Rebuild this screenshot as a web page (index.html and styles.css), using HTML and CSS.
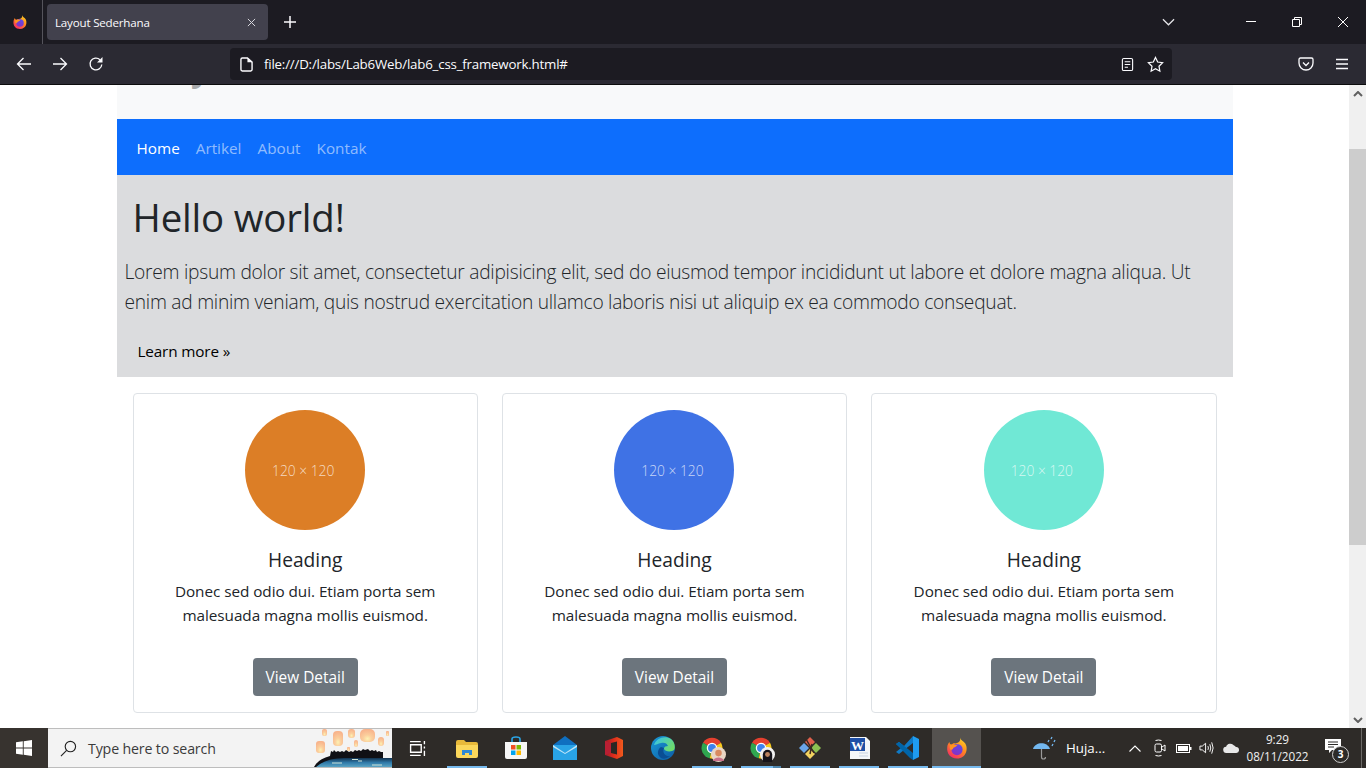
FILE: index.html
```html
<!DOCTYPE html>
<html lang="id">
<head>
<meta charset="utf-8">
<title>Layout Sederhana</title>
<link rel="stylesheet" href="styles.css">
</head>
<body>
<svg class="defs" width="0" height="0" aria-hidden="true">
  <defs>
    <linearGradient id="fxg" x1="0.8" y1="0" x2="0.2" y2="1"><stop offset="0" stop-color="#ffd426"/><stop offset="0.45" stop-color="#ff8a1f"/><stop offset="1" stop-color="#f5236b"/></linearGradient>
    <linearGradient id="fxp" x1="0.7" y1="0" x2="0.3" y2="1"><stop offset="0" stop-color="#5b4be8"/><stop offset="1" stop-color="#8a2fc0"/></linearGradient>
    <linearGradient id="edg" x1="0" y1="0" x2="1" y2="1"><stop offset="0" stop-color="#1b9ad6"/><stop offset="1" stop-color="#0c5ba5"/></linearGradient>
    <linearGradient id="edg2" x1="0" y1="0" x2="1" y2="0.6"><stop offset="0" stop-color="#35c1f1"/><stop offset="1" stop-color="#6fdc6a"/></linearGradient>
    <linearGradient id="ofg" x1="0" y1="0" x2="1" y2="0"><stop offset="0" stop-color="#a01a2c"/><stop offset="0.5" stop-color="#e02d1b"/><stop offset="1" stop-color="#f05a1d"/></linearGradient>
    <radialGradient id="lan" cx="0.5" cy="0.75" r="0.7"><stop offset="0" stop-color="#fdf2b4"/><stop offset="0.4" stop-color="#fbcf9d"/><stop offset="1" stop-color="#f8b48c"/></radialGradient>
    <linearGradient id="wat" x1="0" y1="0" x2="0" y2="1"><stop offset="0" stop-color="#12324f"/><stop offset="0.5" stop-color="#2f79a8"/><stop offset="1" stop-color="#5aa4c4"/></linearGradient>
    <symbol id="firefox" viewBox="0 0 32 32">
      <path d="M20 2c1 4 5 5 7 8 4 6 2 20-11 20C7 30 2 23 3 15c0-3 2-6 3-7 0 2 1 3 2 4 2-2 4-2.500 6-2 6-1 7-5 6-8z" fill="url(#fxg)"/>
      <circle cx="16" cy="18" r="7.500" fill="url(#fxp)"/>
      <path d="M7 11c3 1 7 2 10 0-2 4-5 4-6 5 0 2-3 3-4 2-1-2-1-5 0-7z" fill="#ff9320"/>
    </symbol>
    <symbol id="chrome" viewBox="0 0 32 32">
      <path d="M16 16 4 9A14 14 0 0 1 28 9z" fill="#e5402f"/>
      <path d="M16 16 4 9a14 14 0 0 0 9 20.800z" fill="#2fa650"/>
      <path d="M16 16 28 9a14 14 0 0 1-15 20.800z" fill="#f8c91c"/>
      <circle cx="16" cy="16" r="7" fill="#fff"/>
      <circle cx="16" cy="16" r="5.300" fill="#3f82ee"/>
    </symbol>
  </defs>
</svg>

<div class="browser">
  <header class="tabbar">
    <div class="fx-slot"><svg class="ic16" viewBox="0 0 32 32"><use href="#firefox"/></svg></div>
    <div class="tab">
      <span class="tab-title">Layout Sederhana</span>
      <svg class="ic-close" viewBox="0 0 10 10"><path d="M1 1l8 8M9 1l-8 8"/></svg>
    </div>
    <svg class="ic-new" viewBox="0 0 14 14"><path d="M7 1v12M1 7h12"/></svg>
    <svg class="ic-list" viewBox="0 0 14 8"><path d="M1 1l6 6 6-6"/></svg>
    <div class="winctl">
      <div class="winbtn"><svg viewBox="0 0 10 10"><path d="M0 4.500h10"/></svg></div>
      <div class="winbtn"><svg viewBox="0 0 10 10"><path d="M.5 2.500h7v7h-7zM2.500 2.500V.5h7v7h-2"/></svg></div>
      <div class="winbtn"><svg viewBox="0 0 10 10"><path d="M0 0l10 10M10 0L0 10"/></svg></div>
    </div>
  </header>

  <nav class="toolbar">
    <button class="tool"><svg viewBox="0 0 16 16"><path d="M15 8H1.500M7.500 2 1.500 8l6 6"/></svg></button>
    <button class="tool"><svg viewBox="0 0 16 16"><path d="M1 8h13.500M8.500 2l6 6-6 6"/></svg></button>
    <button class="tool"><svg viewBox="0 0 16 16"><path d="M13.800 8.500A5.900 5.900 0 1 1 12 3.700"/><path class="fill" d="M14.500 1v5.500H9z"/></svg></button>
    <div class="urlbar">
      <svg class="ic-doc" viewBox="0 0 14 16"><path d="M2.500 1h5.500l5 4.500v8q0 1.500-1.500 1.500h-9Q1 15 1 13.500v-11Q1 1 2.500 1z"/><path class="fill" d="M8 1l5 4.500H8z"/></svg>
      <span class="url">file:///D:/labs/Lab6Web/lab6_css_framework.html#</span>
      <svg class="ic-reader" viewBox="0 0 14 16"><rect x="1.500" y="1.500" width="11" height="13" rx="1.500"/><path d="M4 5h6M4 8h6M4 11h3.500"/></svg>
      <svg class="ic-star" viewBox="0 0 18 18"><path d="M9 1.500l2.300 4.900 5.200.7-3.800 3.700.9 5.300L9 13.500l-4.600 2.600.9-5.300L1.500 7.100l5.200-.7z"/></svg>
    </div>
    <button class="tool tool-push"><svg viewBox="0 0 16 16"><path d="M2.500 2h11Q15 2 15 3.500V7A7 7 0 0 1 1 7V3.500Q1 2 2.500 2z"/><path d="M5 6.500l3 3 3-3"/></svg></button>
    <button class="tool"><svg viewBox="0 0 16 16"><path d="M2 3.500h12M2 8h12M2 12.500h12"/></svg></button>
  </nav>

  <div class="viewport">
    <main class="page">
      <div class="container">
        <div class="brandbar"><span class="brand">Layout</span></div>
        <div class="navbar">
          <a class="navlink active" href="#">Home</a>
          <a class="navlink" href="#">Artikel</a>
          <a class="navlink" href="#">About</a>
          <a class="navlink" href="#">Kontak</a>
        </div>
        <section class="hero">
          <h1 class="hero-title">Hello world!</h1>
          <p class="lead">Lorem ipsum dolor sit amet, consectetur adipisicing elit, sed do eiusmod tempor incididunt ut labore et dolore magna aliqua. Ut enim ad minim veniam, quis nostrud exercitation ullamco laboris nisi ut aliquip ex ea commodo consequat.</p>
          <a class="learn" href="#">Learn more »</a>
        </section>
        <section class="cards">
          <article class="card">
            <div class="thumb orange">120 × 120</div>
            <h5 class="card-title">Heading</h5>
            <p class="card-text">Donec sed odio dui. Etiam porta sem malesuada magna mollis euismod.</p>
            <a class="btn" href="#">View Detail</a>
          </article>
          <article class="card">
            <div class="thumb blue">120 × 120</div>
            <h5 class="card-title">Heading</h5>
            <p class="card-text">Donec sed odio dui. Etiam porta sem malesuada magna mollis euismod.</p>
            <a class="btn" href="#">View Detail</a>
          </article>
          <article class="card">
            <div class="thumb teal">120 × 120</div>
            <h5 class="card-title">Heading</h5>
            <p class="card-text">Donec sed odio dui. Etiam porta sem malesuada magna mollis euismod.</p>
            <a class="btn" href="#">View Detail</a>
          </article>
        </section>
      </div>
    </main>
    <div class="scrollbar">
      <div class="sb-arrow"><svg viewBox="0 0 10 6"><path d="M1 5l4-4 4 4"/></svg></div>
      <div class="sb-gap"></div>
      <div class="sb-thumb"></div>
      <div class="sb-rest"></div>
      <div class="sb-arrow"><svg viewBox="0 0 10 6"><path d="M1 1l4 4 4-4"/></svg></div>
    </div>
  </div>
</div>

<footer class="taskbar">
  <div class="start">
    <svg viewBox="0 0 16 16"><path d="M0 2.300 6.800 1.300v6.300H0zM7.700 1.200 16 0v7.600H7.700zM0 8.400h6.800v6.300L0 13.700zM7.700 8.400H16V16l-8.300-1.200z"/></svg>
  </div>
  <div class="search">
    <svg class="ic-search" viewBox="0 0 18 18"><circle cx="11" cy="7" r="5.500"/><path d="M7 11l-6 6"/></svg>
    <span class="search-text">Type here to search</span>
    <svg class="scene" viewBox="0 0 80 38">
      <g fill="url(#lan)">
        <rect x="10" y="0" width="5" height="7" rx="2"/><rect x="21" y="2" width="10" height="15" rx="4"/>
        <rect x="4" y="12" width="9" height="12" rx="3"/><rect x="36" y="0" width="7" height="9" rx="3"/>
        <rect x="42" y="11" width="4" height="7" rx="2"/><rect x="48" y="0" width="15" height="13" rx="5"/>
        <rect x="66" y="8" width="6" height="9" rx="3"/><rect x="74" y="2" width="3" height="5" rx="1"/>
        <rect x="35" y="18" width="3" height="4" rx="1"/>
      </g>
      <path d="M2 38Q6 30 18 27l1-5 2 1 1-2 2 2 2-1 2 1 2-1 2 1 2-2 3 2 2-1 2 1 2-2 2 1 2-1 2 1 2-2 2 1 3-1 2 2 2-1 2 1 2-1 1 2 2-1 2 1 2 0v16z" fill="#101015"/>
      <path d="M4 38Q14 29 32 29h48v9z" fill="url(#wat)"/>
      <path d="M20 34h10M40 30.500h6M46 32h4M60 36h10" stroke="#cfe4d8"/>
    </svg>
  </div>
  <div class="apps">
    <div class="app"><svg class="ic-white" viewBox="0 0 16 16"><path d="M1 1.500h10M1 14.500h10M1.500 4.500h10v7h-10zM14.500 1v3M14.500 6v2M14.500 10v5"/></svg></div>
    <div class="app on">
      <svg viewBox="0 0 24 24"><path d="M1 6Q1 4 3 4h6l2 2h10q2 0 2 2v12H1z" fill="#e8b93a"/><path d="M1 9h22v11q0 2-2 2H3q-2 0-2-2z" fill="#fbd75b"/><path d="M7 19v-5h10v5h-3v-2h-4v2z" fill="#2f88d4"/></svg>
    </div>
    <div class="app">
      <svg viewBox="0 0 24 24"><path d="M8 6V3q0-2 4-2t4 2v3" fill="none" stroke="#2aa6e8" stroke-width="1.600"/><path d="M1 6h22v15q0 2-2 2H3q-2 0-2-2z" fill="#f6f6f6"/><path fill="#f25022" d="M7 9h4.500v4.500H7z"/><path fill="#7fba00" d="M12.500 9H17v4.500h-4.500z"/><path fill="#00a4ef" d="M7 14.500h4.500V19H7z"/><path fill="#ffb900" d="M12.500 14.500H17V19h-4.500z"/></svg>
    </div>
    <div class="app">
      <svg viewBox="0 0 24 24"><path d="M0 9 12 0l12 9z" fill="#0f6fc0"/><path d="M0 9h24v15H0z" fill="#29a3e6"/><path d="M0 9l12 8 12-8v2l-12 7L0 11z" fill="#bfe4f7"/></svg>
    </div>
    <div class="app">
      <svg viewBox="0 0 24 24"><path d="M3 5 15 1l6 3v16l-6 3-12-4z" fill="url(#ofg)"/><path d="M9 7l6-1.500v13L9 17z" fill="#2a2724"/><path d="M9 7 3 5v14l6-2z" fill="#b81f33"/></svg>
    </div>
    <div class="app">
      <svg viewBox="0 0 24 24"><circle cx="12" cy="12" r="12" fill="url(#edg)"/><path d="M3 9C5 2 14-1 20 3c4 3 4.500 9 3 11-2 2-9 2-10-1-.5-2 2-3 4-3-1-3-4-4-7-3-3 .5-5 2-7 2z" fill="url(#edg2)"/><path d="M13 12c-2 4 1 9 6 8-5 4-9 3-11 0-2-3-1-7 2-9z" fill="#0a4e94"/></svg>
    </div>
    <div class="app on">
      <svg viewBox="0 0 32 32"><use href="#chrome"/></svg>
      <svg class="avatar" viewBox="0 0 16 16"><circle cx="8" cy="8" r="8" fill="#e9d6c4"/><circle cx="8" cy="6.500" r="3.500" fill="#d98a5f"/><path d="M2 15c1-5 11-5 12 0z" fill="#c9708a"/></svg>
    </div>
    <div class="app on multi">
      <svg viewBox="0 0 32 32"><use href="#chrome"/></svg>
      <svg class="avatar" viewBox="0 0 16 16"><circle cx="8" cy="8" r="8" fill="#f2f2f2"/><path d="M3 16V8a5 5 0 0 1 10 0v8z" fill="#16141a"/><circle cx="8" cy="8" r="2.600" fill="#b9825f"/></svg>
    </div>
    <div class="app on">
      <svg viewBox="0 0 24 24"><path d="M12 1l5 5-5 5-5-5z" fill="#e0604c"/><path d="M6 7l5 5-5 5-5-5z" fill="#6aa5e8"/><path d="M18 7l5 5-5 5-5-5z" fill="#8cc152"/><path d="M12 13l5 5-5 5-5-5z" fill="#f2d260"/><path d="M8 3l8 14M14 8l-2 10" stroke="#3a2a22" stroke-width="1.500" fill="none"/></svg>
    </div>
    <div class="app on">
      <svg viewBox="0 0 24 24"><path d="M3 1h16l4 4v18H3z" fill="#f4f6f9"/><path d="M3 2h15v13H3z" fill="#1f4fa6"/><text class="word-w" x="4" y="14">W</text><path d="M12 17h9M12 20h9" stroke="#c8d3e3"/></svg>
    </div>
    <div class="app on">
      <svg viewBox="0 0 24 24"><path d="M17 0l6 3v18l-6 3z" fill="#1f9cf0"/><path d="M17 0v7l-9 7-5 4-3-2 5-4-5-4 3-2 5 4z" fill="#0f7ac6"/><path d="M17 24v-7L3 6 0 8l14 14z" fill="#0065a9"/></svg>
    </div>
    <div class="app on active">
      <svg viewBox="0 0 32 32"><use href="#firefox"/></svg>
    </div>
  </div>
  <div class="tray">
    <svg class="ic-rain" viewBox="0 0 26 26"><path d="M1 14C3 7 15 6 18 14z" fill="#73b8f0"/><path d="M9.500 14v8q0 2 2 2t2-2" stroke="#9a9a9a" stroke-width="1.200" fill="none"/><path d="M17 5l-1 2M20 2l-1 2M23 5l-1 2M21 9l-1 2" stroke="#73b8f0" stroke-width="1.300"/></svg>
    <span class="weather">Huja...</span>
    <svg class="ic-up" viewBox="0 0 12 7"><path d="M.5 6.500 6 1l5.500 5.500"/></svg>
    <svg class="ic-meet" viewBox="0 0 12 18"><path d="M1.500 1.500q3-1 6 0M1.500 16.500q3 1 6 0"/><rect x="1" y="5" width="6.500" height="8" rx="1.500"/><path d="M8 8l3-2v6l-3-2"/></svg>
    <svg class="ic-batt" viewBox="0 0 16 9"><rect x=".5" y=".5" width="13" height="8"/><rect class="fill" x="2" y="2" width="10" height="5"/><rect class="fill" x="14" y="3" width="1.500" height="3"/></svg>
    <svg class="ic-vol" viewBox="0 0 17 14"><path d="M1 5h2.500L7 2v10L3.500 9H1zM9.500 5q1 2 0 4M11.500 3q2 4 0 8M13.500 1q3 6 0 12"/></svg>
    <svg class="ic-cloud" viewBox="0 0 18 11"><path d="M4 11a3.500 3.500 0 0 1-.5-7A5 5 0 0 1 12 2.500a4 4 0 0 1 2.500 2A3.200 3.200 0 0 1 15 11z" fill="#e8e8e8"/></svg>
    <div class="clock"><span>9:29</span><span>08/11/2022</span></div>
    <div class="notif">
      <svg viewBox="0 0 16 15"><path d="M0 0h16v11H7l-3 3v-3H0z" fill="#fff"/><path d="M3 3h10M3 5.500h10M3 8h6" stroke="#2d2b28"/></svg>
      <span class="badge">3</span>
    </div>
    <div class="show-desktop"></div>
  </div>
</footer>
</body>
</html>
```

FILE: styles.css
```css
* { box-sizing: border-box; }
html, body { margin: 0; height: 100%; overflow: hidden; }
body {
  width: 1366px; height: 768px;
  display: flex; flex-direction: column;
  font-family: "Open Sans", "Noto Sans", "Liberation Sans", sans-serif;
  color: #212529; background: #fff;
}
.defs { position: absolute; }
svg { display: block; flex: none; }

.browser { flex: 1; min-height: 0; display: flex; flex-direction: column; }

/* tab strip */
.tabbar { height: 44px; background: #1c1b22; display: flex; align-items: center; flex: none; }
.fx-slot { width: 43px; height: 44px; border-right: 1px solid #55545c; display: flex; align-items: center; padding-left: 12px; }
.ic16 { width: 16px; height: 16px; }
.tab { margin-left: 4px; width: 221px; height: 36px; background: #42414d; border-radius: 4px; display: flex; align-items: center; padding: 0 12px 0 8px; justify-content: space-between; }
.tab-title { color: #fbfbfe; font-size: 11.600px; letter-spacing: -.2px; }
.ic-close { width: 9px; height: 9px; fill: none; stroke: #d8d8de; stroke-width: 1.100; }
.ic-new { width: 14px; height: 14px; margin-left: 15px; fill: none; stroke: #fbfbfe; stroke-width: 1.500; }
.ic-list { width: 13px; height: 8px; margin-left: 865px; fill: none; stroke: #e6e6ea; stroke-width: 1.300; }
.winctl { margin-left: auto; display: flex; }
.winbtn { width: 46px; height: 44px; display: flex; align-items: center; justify-content: center; }
.winbtn svg { width: 10px; height: 10px; fill: none; stroke: #fff; stroke-width: 1; }

/* toolbar */
.toolbar { height: 41px; background: #2b2a33; border-bottom: 1px solid #0c0c0d; padding: 0 8px; display: flex; align-items: center; gap: 4px; flex: none; }
.tool { width: 32px; height: 32px; padding: 0; background: none; border: 0; display: flex; align-items: center; justify-content: center; }
.tool svg { width: 16px; height: 16px; fill: none; stroke: #fbfbfe; stroke-width: 1.300; }
.tool .fill, .ic-doc .fill { fill: #fbfbfe; stroke: none; }
.tool-push { margin-left: auto; }
.urlbar { margin-left: 114px; width: 942px; height: 32px; background: #1c1b22; border-radius: 4px; display: flex; align-items: center; padding: 0 8px 0 10px; }
.ic-doc { width: 13px; height: 15px; fill: none; stroke: #fbfbfe; stroke-width: 1.500; }
.url { color: #fbfbfe; font-size: 13.300px; letter-spacing: -.2px; margin-left: 11px; white-space: nowrap; }
.ic-reader { width: 13px; height: 15px; margin-left: auto; fill: none; stroke: #fbfbfe; stroke-width: 1.200; }
.ic-star { width: 17px; height: 17px; margin-left: 13px; fill: none; stroke: #fbfbfe; stroke-width: 1.300; }

/* page */
.viewport { flex: 1; min-height: 0; display: flex; }
.page { flex: 1; min-width: 0; overflow: hidden; background: #fff; }
.container { width: 1116px; margin: 0 auto; }
.brandbar { height: 34px; background: #f8f9fa; overflow: hidden; }
.brand { display: block; margin: -40px 0 0 37px; font-size: 32px; line-height: 48px; font-weight: 700; color: #a7a9ab; }
.navbar { height: 56px; background: #0d6efd; display: flex; align-items: center; padding: 1px 12px 0; }
.navlink { padding: 8px; font-size: 15.300px; line-height: 24px; color: rgba(255,255,255,.55); text-decoration: none; white-space: nowrap; }
.navlink.active { color: #fff; }
.hero { height: 202px; background: #dbdcde; padding: 18px 8px 0; }
.hero-title { margin: 0 0 16px 8px; font-size: 38.400px; line-height: 48px; font-weight: 400; letter-spacing: -.17px; }
.lead { margin: 0 0 16px; font-size: 19.200px; line-height: 30px; font-weight: 300; letter-spacing: -.255px; }
.learn { display: inline-block; margin-left: 13px; font-size: 15.300px; line-height: 36px; letter-spacing: -.15px; color: #000; text-decoration: none; }

.cards { display: grid; grid-template-columns: repeat(3, 1fr); gap: 24px; padding: 16px 16px 0; }
.card { height: 320px; background: #fff; border: 1px solid #dee2e6; border-radius: 4px; padding: 16px; display: flex; flex-direction: column; align-items: center; text-align: center; }
.thumb { width: 120px; height: 120px; border-radius: 50%; flex: none; display: flex; align-items: center; justify-content: center; padding-right: 4px; color: rgba(255,255,255,.72); font-size: 13.800px; font-weight: 300; }
.orange { background: #dc7e26; }
.blue { background: #3f72e5; }
.teal { background: #70e8d5; }
.card-title { margin: 18px 0 7px; font-size: 19.200px; line-height: 24px; font-weight: 400; }
.card-text { margin: 0 0 31px; font-size: 15.300px; line-height: 24px; letter-spacing: -.05px; color: #212529; width: 270px; }
.btn { width: 105px; height: 38px; background: #6c757d; border-radius: 4px; color: #fff; font-size: 15.400px; line-height: 40px; text-decoration: none; }

/* scrollbar */
.scrollbar { width: 17px; background: #f0f0f0; display: flex; flex-direction: column; flex: none; }
.sb-arrow { height: 17px; display: flex; align-items: center; justify-content: center; flex: none; }
.sb-arrow svg { width: 10px; height: 6px; fill: none; stroke: #606060; stroke-width: 2; }
.sb-gap { height: 47px; flex: none; }
.sb-thumb { height: 396px; background: #cdcdcd; flex: none; }
.sb-rest { flex: 1; }

/* taskbar */
.taskbar { height: 40px; background: #2e2b28; display: flex; align-items: stretch; flex: none; }
.start { width: 48px; flex: none; display: flex; align-items: center; justify-content: center; background: #37332f; }
.start svg { width: 16px; height: 16px; fill: #fff; }
.search { width: 344px; flex: none; background: #f3f3f3; border: 1px solid #bdbdbd; border-width: 1px 0; display: flex; align-items: center; padding-left: 12px; overflow: hidden; }
.ic-search { width: 17px; height: 17px; fill: none; stroke: #222; stroke-width: 1.200; }
.search-text { margin-left: 11px; font-size: 14.200px; color: #3b3b3b; letter-spacing: -.15px; white-space: nowrap; }
.scene { width: 80px; height: 38px; margin-left: auto; }
.apps { display: flex; flex: none; margin-left: 1px; width: 588px; }
.app { width: 49px; flex: none; display: flex; align-items: center; justify-content: center; position: relative; }
.app svg { width: 24px; height: 24px; }
.app .avatar { width: 15px; height: 15px; position: absolute; left: 24px; top: 19px; }
.app.on { background: linear-gradient(#76b9ed, #76b9ed) bottom center / 40px 2px no-repeat; }
.app.multi { background: linear-gradient(90deg, #76b9ed 80%, #4f86ad 80%) bottom center / 40px 2px no-repeat; }
.app.active { background: #55524f; box-shadow: inset 0 -2px 0 #76b9ed; }
.ic-white { fill: none; stroke: #fff; stroke-width: 1.300; }
.app .ic-white { width: 17px; height: 17px; }
.word-w { font: 700 13px "Liberation Serif", serif; fill: #fff; }
.tray { flex: 1; min-width: 0; display: flex; align-items: center; color: #fff; }
.ic-rain { width: 26px; height: 26px; margin-left: 51px; }
.weather { margin-left: 8px; font-size: 13.300px; width: 38px; flex: none; white-space: nowrap; }
.ic-up { width: 12px; height: 7px; margin-left: 25px; fill: none; stroke: #fff; stroke-width: 1.100; }
.ic-meet { width: 12px; height: 18px; margin-left: 13px; fill: none; stroke: #fff; stroke-width: 1; }
.ic-batt { width: 16px; height: 9px; margin-left: 10px; fill: none; stroke: #fff; stroke-width: 1; }
.ic-batt .fill { fill: #fff; stroke: none; }
.ic-vol { width: 16px; height: 14px; margin-left: 7px; fill: none; stroke: #fff; stroke-width: 1; }
.ic-cloud { width: 16px; height: 10px; margin-left: 8px; }
.clock { width: 75px; flex: none; margin-left: 1px; display: flex; flex-direction: column; align-items: center; font-size: 11.700px; line-height: 17px; color: #f0f0f0; }
.notif { width: 24px; height: 24px; margin-left: 10px; position: relative; flex: none; }
.notif svg { width: 16px; height: 15px; margin-top: 3px; }
.badge { position: absolute; left: 7px; top: 10px; width: 17px; height: 17px; border-radius: 50%; background: #2d2b28; border: 1px solid #cfcfcf; font-size: 10px; font-weight: 700; line-height: 15px; text-align: center; }
.show-desktop { width: 1px; height: 40px; background: #6b6966; margin-left: auto; margin-right: 4px; }
```
